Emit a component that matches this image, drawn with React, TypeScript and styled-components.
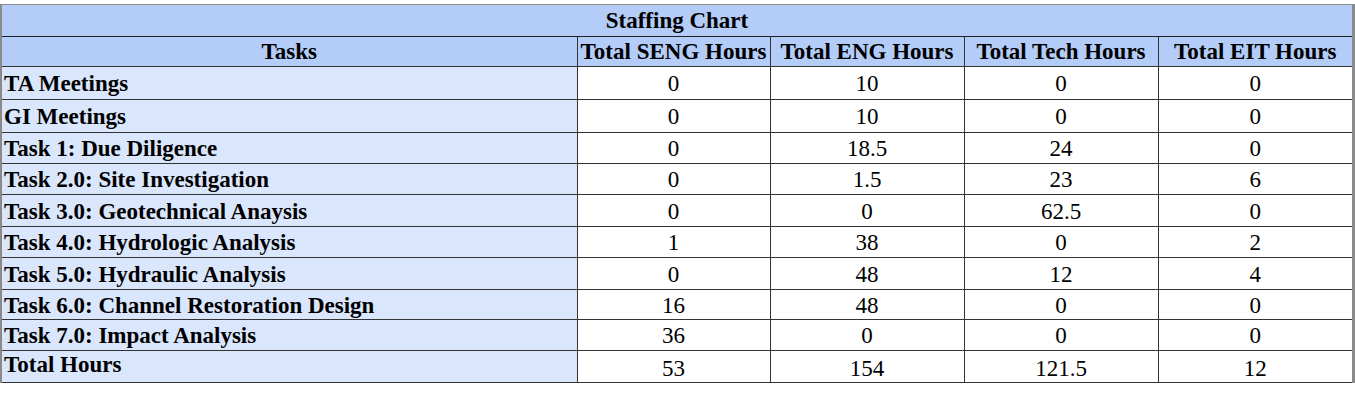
import styled, { createGlobalStyle } from "styled-components";

const GlobalStyle = createGlobalStyle`
    body {
        margin: 0;
        background: #ffffff;
        font-family: "Liberation Serif", "Times New Roman", serif;
    }
`;

const Page = styled.div`
    padding-top: 4px;
    width: 1355px;
`;

const Table = styled.table`
    width: 1355px;
    border-collapse: collapse;
    table-layout: fixed;
    border-top: 1px solid #8a8a8a;
    border-left: 2px solid #8a8a8a;
    border-right: 3px solid #8a8a8a;
    border-bottom: 1px solid #222;
    font-family: "Liberation Serif", "Times New Roman", serif;
    font-size: 23px;
    color: #000;
`;

const Caption = styled.th`
    background: #b4ccf8;
    font-weight: bold;
    height: 31px;
    padding: 0;
    border-bottom: 1px solid #222;
`;

const HeadCell = styled.th`
    background: #b4ccf8;
    font-weight: bold;
    height: 29px;
    padding: 0 2px;
    border: 1px solid #333;
    white-space: nowrap;
    overflow: hidden;
`;

const Row = styled.tr<{ $h: number }>`
    height: ${(p) => p.$h}px;
`;

const TaskCell = styled.td<{ $last?: boolean }>`
    background: #dae6fb;
    font-weight: bold;
    text-align: left;
    padding: ${(p) => (p.$last ? "1px 0 0 2px" : "2px 0 0 2px")};
    border: 1px solid #333;
    border-left: none;
    vertical-align: ${(p) => (p.$last ? "top" : "middle")};
    white-space: nowrap;
`;

const NumCell = styled.td<{ $last?: boolean }>`
    background: #ffffff;
    text-align: center;
    padding: ${(p) => (p.$last ? "5px 0 0" : "2px 0 0")};
    border: 1px solid #333;
    white-space: nowrap;
`;

const rows: { h: number; cells: string[] }[] = [
    { h: 33, cells: ["TA Meetings", "0", "10", "0", "0"] },
    { h: 33, cells: ["GI Meetings", "0", "10", "0", "0"] },
    { h: 31, cells: ["Task 1: Due Diligence", "0", "18.5", "24", "0"] },
    { h: 31, cells: ["Task 2.0: Site Investigation", "0", "1.5", "23", "6"] },
    { h: 32, cells: ["Task 3.0: Geotechnical Anaysis", "0", "0", "62.5", "0"] },
    { h: 31, cells: ["Task 4.0: Hydrologic Analysis", "1", "38", "0", "2"] },
    { h: 32, cells: ["Task 5.0: Hydraulic Analysis", "0", "48", "12", "4"] },
    { h: 30, cells: ["Task 6.0: Channel Restoration Design", "16", "48", "0", "0"] },
    { h: 31, cells: ["Task 7.0: Impact Analysis", "36", "0", "0", "0"] },
    { h: 32, cells: ["Total Hours", "53", "154", "121.5", "12"] },
];

export default function App() {
    return (
        <Page>
            <GlobalStyle />
            <Table>
                <colgroup>
                    <col style={{ width: 576 }} />
                    <col style={{ width: 193 }} />
                    <col style={{ width: 194 }} />
                    <col style={{ width: 194 }} />
                    <col />
                </colgroup>
                <thead>
                    <tr>
                        <Caption colSpan={5}>Staffing Chart</Caption>
                    </tr>
                    <tr>
                        <HeadCell>Tasks</HeadCell>
                        <HeadCell>Total SENG Hours</HeadCell>
                        <HeadCell>Total ENG Hours</HeadCell>
                        <HeadCell>Total Tech Hours</HeadCell>
                        <HeadCell>Total EIT Hours</HeadCell>
                    </tr>
                </thead>
                <tbody>
                    {rows.map((row, i) => {
                        const last = i === rows.length - 1;
                        return (
                            <Row key={i} $h={row.h}>
                                <TaskCell $last={last}>{row.cells[0]}</TaskCell>
                                {row.cells.slice(1).map((v, j) => (
                                    <NumCell key={j} $last={last}>{v}</NumCell>
                                ))}
                            </Row>
                        );
                    })}
                </tbody>
            </Table>
        </Page>
    );
}
